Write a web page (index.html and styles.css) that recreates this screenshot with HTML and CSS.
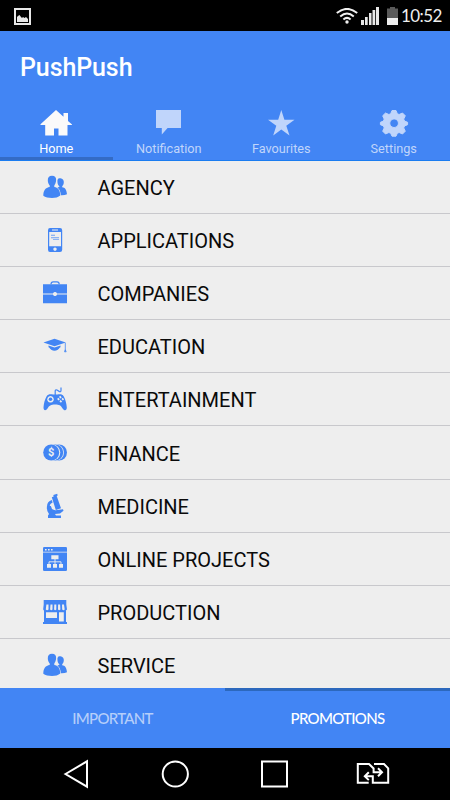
FILE: index.html
```html
<!DOCTYPE html>
<html lang="en">
<head>
    <meta charset="UTF-8">
    <meta name="viewport" content="width=device-width, initial-scale=1.0">
    <title>PushPush</title>
    <link rel="stylesheet" href="styles.css">
</head>
<body>
    <!-- icon shared by agency and service -->
    <svg class="defs">
        <symbol id="people" viewBox="0 0 24 24">
            <path d="M16.5 3.2C18.8 3.2 21 4.6 20.8 7.2C20.7 9.4 20 10.3 19.2 11.2V12.2C22 12.8 23.4 14 24 19.3Q21.5 20.5 17.9 20.3C17.5 16 16.3 13.8 14.4 12.7L16.6 11.5C15.4 10.5 14.6 9.4 14.5 7.5Q13.9 3.4 16.5 3.2Z"/>
            <path d="M9 .8C12 .8 13.4 2.8 13.1 5.6C12.9 8 12.1 9.4 11.3 10.4V12C15 12.7 17 14.6 17.3 20.5C15.4 22.2 12.4 23 9 23S2.2 22.2.3 20.8C.4 15 2.6 12.8 6.7 12V10.4C5.7 9.4 5 7.8 4.8 5.7C4.7 2.7 6.1.8 9 .8Z"/>
        </symbol>
    </svg>

    <div class="statusbar">
        <svg class="picture" width="17" height="17" viewBox="0 0 17 17">
            <path d="M1 1h15v15H1z" fill="none" stroke="#e8e8e8" stroke-width="2"/>
            <path d="M3 14V9l1-1 1.5-1 1.5 2 1 1 1-1 1.5 1 1.5-1 2 2v3z" fill="#e8e8e8"/>
        </svg>
        <svg class="wifi" width="22" height="16" viewBox="0 0 22 16">
            <path d="M.8 5.1Q11-3.3 21.2 5.1M4.2 8.4Q11 2.6 17.8 8.4M7.4 11.4Q11 8.3 14.6 11.4" fill="none" stroke="#f0f0f0" stroke-width="2"/>
            <circle cx="11" cy="14" r="1.7" fill="#f0f0f0"/>
        </svg>
        <svg class="signal" width="18" height="18" viewBox="0 0 18 18">
            <path d="M0 13h3v5H0zM4 10h2.7v8H4zM8 6h2.5v12H8zM11.5 3h2.7v15h-2.7zM15 0h3v18h-3z" fill="#e8e8e8"/>
        </svg>
        <svg class="battery" width="11" height="18" viewBox="0 0 11 18">
            <path d="M3 0h5v1.5h3V11H0V1.5h3z" fill="#5a5a5a"/>
            <path d="M0 11h11v7H0z" fill="#ededed"/>
        </svg>
        <span class="time">10:52</span>
    </div>

    <header class="header">
        <h1>PushPush</h1>
        <nav class="tabs">
            <a class="tab active">
                <svg width="32" height="28" viewBox="0 0 32 28"><path d="M16 1L23.5 7.8V4H28v8L32 15.4V16H27.5V26.6H18.5V19.5H14V26.6H5.2V16H.5V15.2Z"/></svg>
                <span>Home</span>
            </a>
            <a class="tab">
                <svg width="32" height="28" viewBox="0 0 32 28"><path d="M3 1H28V19H14.6L8.8 25.5V19H3Z"/></svg>
                <span>Notification</span>
            </a>
            <a class="tab">
                <svg width="32" height="28" viewBox="0 0 32 28"><path d="M16.3 1L19.4 10.8H29.5L21.3 16.8L24.5 26.4L16.3 20.5L8.2 26.4L11.3 16.8L3 10.8H13.2Z"/></svg>
                <span>Favourites</span>
            </a>
            <a class="tab">
                <svg width="32" height="28" viewBox="0 0 32 28"><path stroke="#c0d5fb" stroke-width="1" stroke-linejoin="round" fill-rule="evenodd" d="M14 1.5h4l1.3 3.2 1.8.8 3.4-1.5 2.8 2.8-1.6 3.3.9 2 3 1.2v2.4l-3 1.2-.9 2 1.6 3.3-2.8 2.8-3.4-1.5-1.8.8-1.3 2.9h-4l-1.3-2.9-1.8-.8L7.500 25 4.700 22.200l1.500-3.300-.8-2-3-1.200v-2.400l3-1.200.8-2L4.700 6.800 7.500 4l3.400 1.500 1.800-.8zM16.1 9.900a4.300 4.300 0 1 0 .01 0z"/></svg>
                <span>Settings</span>
            </a>
        </nav>
    </header>

    <ul class="list">
        <li><svg class="icon"><use href="#people"/></svg><span>AGENCY</span></li>
        <li>
            <svg class="icon" viewBox="0 0 24 24">
                <path fill-rule="evenodd" d="M7 0H17Q19.2 0 19.2 2.2V21.8Q19.2 24 17 24H7Q5 24 5 21.8V2.2Q5 0 7 0ZM6.2 4V18.3H18V4ZM9 1.5V2.5H15V1.5ZM12 19.4A1.7 1.7 0 1 0 12.01 19.4Z"/>
                <path d="M8 6.8h4v1H8zM8 9.2h8v1H8zM10 11.2h6v.8h-6z" opacity=".75"/>
            </svg>
            <span>APPLICATIONS</span>
        </li>
        <li>
            <svg class="icon" viewBox="0 0 24 24">
                <path d="M8 3.3Q8 .8 10.2.8H14Q16.2.8 16.2 3.3" fill="none" stroke="#4285f4" stroke-width="1.2"/>
                <path d="M0 3.2H24V12.500H14Q12 10.500 10 12.500H0ZM0 13.500H10Q12 16 14 13.500H24V22.300H0Z"/>
                <circle cx="12" cy="13" r="1.900" fill="#eee"/>
            </svg>
            <span>COMPANIES</span>
        </li>
        <li>
            <svg class="icon" viewBox="0 0 24 24">
                <path d="M.5 8.6L11.5 4.7L22.8 8.6L11.5 12.3Z"/>
                <path d="M5.5 11.4L11.5 13.4L17.5 11.4V13.2Q14.5 13.8 14 16H9Q8.5 13.8 5.5 13.2Z"/>
                <path d="M6 13q5.5 2.5 11 0-2 3.8-5.5 3.8T6 13z"/>
                <path d="M22.3 8.8V17.8M22.3 15.8l-.8 2h1.7z" fill="none" stroke="#4285f4" stroke-width=".8"/>
            </svg>
            <span>EDUCATION</span>
        </li>
        <li>
            <svg class="icon" viewBox="0 0 24 24">
                <path d="M12.2 8V4Q12.2 2.3 14 3L16.5 4.6Q18 5.2 18 3.3V.4" fill="none" stroke="#4285f4" stroke-width="1.2"/>
                <path fill-rule="evenodd" d="M3.5 9.5C5.5 6.3 8.5 7.5 10 7.5H14.5C16 7.5 19 6.3 20.8 9.5C22.6 12.7 23.6 17 23.8 20.5C23.8 24.2 21 23.8 19.6 21.5C17.8 18.3 16.3 17.5 12.1 17.5S6.3 18.5 4.5 21.5C3 23.9.4 24 .5 20.3C.8 16.5 1.8 12.5 3.5 9.5ZM7.5 9A3.3 3.3 0 1 0 7.51 9Z"/>
                <circle cx="7.5" cy="12.3" r="1.8"/>
                <path d="M17.2 8.7l1.5 1.5-1.2 1.2L16 9.9zM19.7 10.8l1.4 1.4-1.2 1.2-1.4-1.4zM15.3 10.8l1.5 1.5-1.2 1.2-1.5-1.5zM17.6 13l1.5 1.5-1.2 1.2-1.5-1.5z" fill="#eee"/>
            </svg>
            <span>ENTERTAINMENT</span>
        </li>
        <li>
            <svg class="icon" viewBox="0 0 24 24">
                <circle cx="16" cy="11.5" r="8"/>
                <circle cx="13" cy="11.5" r="8" fill="#eee"/>
                <circle cx="12.2" cy="11.5" r="8"/>
                <circle cx="9.2" cy="11.5" r="8.1" fill="#eee"/>
                <circle cx="8.2" cy="11.5" r="8"/>
                <text x="8.2" y="15.4" class="dollar">$</text>
            </svg>
            <span>FINANCE</span>
        </li>
        <li>
            <svg class="icon" viewBox="0 0 24 24">
                <path d="M10.3.9L14.2-.2L14.7 1.4L13.7 2L18 14.2L12.8 16L8.8 3.3L10.7 2.4Z"/>
                <path d="M9.2 7.3Q4.5 9 5.6 13.6Q6.5 17 12 17.5" fill="none" stroke="#4285f4" stroke-width="2.6"/>
                <path d="M4 12h4.5l2.2 4.5L20 15.3l.5 1.5L17 19.6l-5 .4 1 1.6h5V24H5V21.5L6 20Q3.300 17 4 12z"/>
                <path d="M8.800 9.500l2 5-1.600.900L7.500 11z" fill="#eee"/>
            </svg>
            <span>MEDICINE</span>
        </li>
        <li>
            <svg class="icon" viewBox="0 0 24 24">
                <rect width="24" height="24" rx="1.3"/>
                <path d="M0 4.8H24V5.5H0zM2 2h1.6v1.6H2zM5 2h1.6v1.6H5zM8 2h1.6v1.6H8zM8.3 8.3h7.2v4H8.3zM4 17h4v3.8H4zM10 17h4v3.8h-4zM16 17h4v3.8h-4z" fill="#eee"/>
                <path d="M12 12v5M6 17v-2.2h12V17" fill="none" stroke="#eee" stroke-width=".9"/>
            </svg>
            <span>ONLINE PROJECTS</span>
        </li>
        <li>
            <svg class="icon" viewBox="0 0 24 24">
                <path fill-rule="evenodd" d="M.7 0H23.3V4.5L24 9.5Q22.8 11 21.6 10.2L23 10.5V22H24V24H0V22H1V10.5Q.2 10 .2 9L.7 4.5ZM3 12.3V18H14V12.3ZM16 12.3V21.5H20.8V12.3Z"/>
                <path d="M3.4 4.5h2.1v5q-1.3 1.4-2.7 0zM7.5 4.5h2v5q-1.2 1.4-2.4 0zM11.3 4.5h2v5q-1.1 1.4-2.2 0zM15.1 4.5h2l.3 5q-1.2 1.4-2.4 0zM19 4.5h2l.7 5q-1.2 1.4-2.5 0z" fill="#eee"/>
            </svg>
            <span>PRODUCTION</span>
        </li>
        <li><svg class="icon"><use href="#people"/></svg><span>SERVICE</span></li>
    </ul>

    <div class="bottom-tabs">
        <a>IMPORTANT</a>
        <a class="active">PROMOTIONS</a>
    </div>

    <div class="navbar">
        <svg width="28" height="30" viewBox="0 0 28 30"><path d="M3.500 15L25 2.300V27.700Z"/></svg>
        <svg width="28" height="30" viewBox="0 0 28 30"><circle cx="14.300" cy="15" r="12.600"/></svg>
        <svg width="28" height="30" viewBox="0 0 28 30"><path d="M2 2.500H27V27.500H2Z"/></svg>
        <svg class="switch" width="34" height="30" viewBox="0 0 34 30"><path d="M12.7 23.7H1.8V5H13L17.6 9.5V13.2H25.5M22 9.3L26 13.2L22 17.2M18 5H28L32.2 9.3V23.7H16.8V17.2H9.2M12.8 13.2L8.8 17.2L12.8 21.1"/></svg>
    </div>
</body>
</html>
```
FILE: styles.css
```css
body {
    margin: 0;
    height: 800px;
    display: flex;
    flex-direction: column;
    overflow: hidden;
    background-color: #eee;
    font-family: Roboto, sans-serif;
}

.defs {
    display: none;
}

.statusbar {
    display: flex;
    align-items: center;
    box-sizing: border-box;
    height: 31px;
    flex: none;
    padding: 1px 9px 0 14px;
    background-color: #000;
}

.picture {
    margin-right: auto;
}

.wifi {
    margin-right: 3px;
}

.signal {
    margin-right: 8px;
}

.battery {
    margin-right: 3px;
}

.time {
    width: 40px;
    font-family: Lato, sans-serif;
    font-size: 17px;
    letter-spacing: -0.6px;
    line-height: 20px;
    white-space: nowrap;
    color: #eee;
}

.header {
    display: flex;
    flex-direction: column;
    justify-content: space-between;
    box-sizing: border-box;
    height: 130px;
    flex: none;
    border-bottom: 1px solid #1a7cf0;
    background-color: #4285f4;
}

h1 {
    margin: 22px 0 0 20px;
    font-size: 25px;
    font-weight: 500;
    letter-spacing: -0.1px;
    line-height: 30px;
    color: #fff;
}

.tabs {
    display: grid;
    grid-template-columns: repeat(4, 1fr);
}

.tab {
    display: flex;
    flex-direction: column;
    align-items: center;
    height: 48px;
    border-bottom: 3px solid transparent;
    font-size: 12.7px;
    line-height: 16px;
    color: #c0d5fb;
    fill: #c0d5fb;
}

.tab span {
    margin-top: 4px;
}

.tab.active {
    border-color: #346bc5;
    color: #fff;
    fill: #fafafa;
}

.list {
    flex: 1;
    min-height: 0;
    margin: 0;
    padding: 0;
    overflow: hidden;
    list-style: none;
}

.list li {
    display: flex;
    align-items: center;
    box-sizing: border-box;
    height: 53.1px;
    padding-left: 43px;
    border-bottom: 1px solid #c8c8cc;
    font-size: 20px;
    color: #0a0a0a;
}

.list span {
    padding-top: 2px;
}

.icon {
    width: 24px;
    height: 24px;
    margin-right: 30.5px;
    fill: #4285f4;
    overflow: visible;
}

.dollar {
    font-size: 11px;
    font-weight: bold;
    text-anchor: middle;
    fill: #eee;
}

.bottom-tabs {
    display: grid;
    grid-template-columns: 1fr 1fr;
    height: 60px;
    flex: none;
    background-color: #4285f4;
}

.bottom-tabs a {
    box-sizing: border-box;
    border-top: 3px solid transparent;
    font-family: Lato, sans-serif;
    font-size: 15px;
    font-weight: 500;
    letter-spacing: -0.7px;
    line-height: 54px;
    text-align: center;
    color: #b5cefa;
}

.bottom-tabs .active {
    border-color: #2c68bd;
    color: #fff;
}

.navbar {
    display: flex;
    align-items: center;
    box-sizing: border-box;
    height: 52px;
    flex: none;
    gap: 71px;
    padding-left: 62px;
    background-color: #000;
}

.navbar svg {
    flex: none;
    fill: none;
    stroke: #fff;
    stroke-width: 2;
}

.navbar .switch {
    margin-left: -3px;
}
```
